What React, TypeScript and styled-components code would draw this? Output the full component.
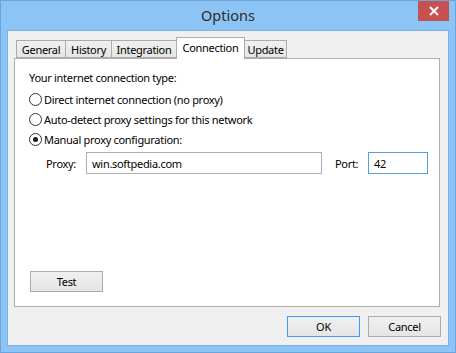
import React from "react";
import styled, { createGlobalStyle } from "styled-components";

const Global = createGlobalStyle`
  html, body { margin: 0; padding: 0; }
  body {
    width: 456px;
    height: 353px;
    overflow: hidden;
    background: #8cc5f5;
    font-family: "Noto Sans", "Open Sans", sans-serif;
    font-size: 11px;
    letter-spacing: -0.3px;
    color: #000;
  }
`;

const Window = styled.div`
  width: 456px;
  height: 353px;
  box-sizing: border-box;
  border: 1px solid #6aa6dc;
  display: flex;
  flex-direction: column;
  padding: 0 6px 6px 6px;
`;

const TitleBar = styled.div`
  height: 29px;
  display: grid;
  grid-template-columns: 1fr auto 1fr;
  align-items: start;
`;

const Title = styled.div`
  grid-column: 2;
  font-size: 14.5px;
  letter-spacing: 0;
  color: #2b2b2b;
  line-height: 29px;
`;

const CloseButton = styled.div`
  grid-column: 3;
  justify-self: end;
  width: 31px;
  height: 20px;
  background: #c75050;
  color: #fff;
  display: flex;
  align-items: center;
  justify-content: center;
`;

const Content = styled.div`
  flex: 1;
  background: #f0f0f0;
  border: 1px solid #7ab3e3;
  display: flex;
  flex-direction: column;
  padding: 6px 8px 0 6px;
`;

const TabStrip = styled.div`
  height: 21px;
  display: flex;
  align-items: flex-end;
  padding-left: 3px;
  position: relative;
  z-index: 1;
`;

const Tab = styled.div<{ $w: number; $active?: boolean }>`
  box-sizing: border-box;
  width: ${(p) => p.$w}px;
  height: ${(p) => (p.$active ? 22 : 18)}px;
  margin-left: -1px;
  margin-bottom: ${(p) => (p.$active ? -1 : 0)}px;
  border: 1px solid #acacac;
  border-bottom: ${(p) => (p.$active ? "none" : "1px solid #acacac")};
  background: ${(p) =>
    p.$active ? "#ffffff" : "linear-gradient(#f0f0f0, #e5e5e5)"};
  display: flex;
  align-items: ${(p) => (p.$active ? "flex-start" : "center")};
  justify-content: center;
  padding-top: ${(p) => (p.$active ? 2 : 0)}px;
  white-space: nowrap;
`;

const Panel = styled.div`
  box-sizing: border-box;
  height: 249px;
  background: #fff;
  border: 1px solid #adadad;
  display: flex;
  flex-direction: column;
  padding: 11px 14px 14px 14px;
`;

const Heading = styled.div`
  line-height: 16px;
`;

const RadioList = styled.div`
  margin-top: 3px;
  display: flex;
  flex-direction: column;
`;

const RadioRow = styled.label`
  height: 20px;
  display: flex;
  align-items: center;
  gap: 2px;
`;

const RadioCircle = styled.span<{ $checked?: boolean }>`
  box-sizing: border-box;
  width: 13px;
  height: 13px;
  border-radius: 50%;
  border: 1px solid #333;
  background: #fff;
  display: flex;
  align-items: center;
  justify-content: center;
  &::after {
    content: "";
    width: 5px;
    height: 5px;
    border-radius: 50%;
    background: ${(p) => (p.$checked ? "#1a1a1a" : "transparent")};
  }
`;

const ProxyRow = styled.div`
  margin-top: 3px;
  margin-left: 17px;
  display: grid;
  grid-template-columns: 40px 236px 13px 33px 60px;
  align-items: center;
`;

const FieldLabel = styled.span<{ $col: number }>`
  grid-column: ${(p) => p.$col};
`;

const TextBox = styled.div<{ $focused?: boolean }>`
  box-sizing: border-box;
  height: 22px;
  border: 1px solid ${(p) => (p.$focused ? "#569de5" : "#abadb3")};
  background: #fff;
  display: flex;
  align-items: center;
  padding-left: 5px;
`;

const Button = styled.div<{ $default?: boolean }>`
  box-sizing: border-box;
  width: 73px;
  height: 21px;
  border: 1px solid ${(p) => (p.$default ? "#3c9cfc" : "#acacac")};
  background: linear-gradient(#f0f0f0, #e5e5e5);
  display: flex;
  align-items: center;
  justify-content: center;
`;

const TestArea = styled.div`
  margin-top: auto;
  padding-left: 1px;
`;

const Footer = styled.div`
  margin-top: 9px;
  margin-right: -1px;
  display: flex;
  justify-content: flex-end;
  gap: 8px;
`;

export default function App() {
  return (
    <>
      <Global />
      <Window>
        <TitleBar>
          <Title>Options</Title>
          <CloseButton>
            <svg width="10" height="10" viewBox="0 0 10 10">
              <path d="M1 1 L9 9 M9 1 L1 9" stroke="#fff" strokeWidth="2" />
            </svg>
          </CloseButton>
        </TitleBar>
        <Content>
          <TabStrip>
            <Tab $w={50}>General</Tab>
            <Tab $w={47}>History</Tab>
            <Tab $w={66}>Integration</Tab>
            <Tab $w={69} $active>
              Connection
            </Tab>
            <Tab $w={43}>Update</Tab>
          </TabStrip>
          <Panel>
            <Heading>Your internet connection type:</Heading>
            <RadioList>
              <RadioRow>
                <RadioCircle />
                Direct internet connection (no proxy)
              </RadioRow>
              <RadioRow>
                <RadioCircle />
                Auto-detect proxy settings for this network
              </RadioRow>
              <RadioRow>
                <RadioCircle $checked />
                Manual proxy configuration:
              </RadioRow>
            </RadioList>
            <ProxyRow>
              <FieldLabel $col={1}>Proxy:</FieldLabel>
              <TextBox>win.softpedia.com</TextBox>
              <FieldLabel $col={4}>Port:</FieldLabel>
              <TextBox $focused>42</TextBox>
            </ProxyRow>
            <TestArea>
              <Button>Test</Button>
            </TestArea>
          </Panel>
          <Footer>
            <Button $default>OK</Button>
            <Button>Cancel</Button>
          </Footer>
        </Content>
      </Window>
    </>
  );
}
